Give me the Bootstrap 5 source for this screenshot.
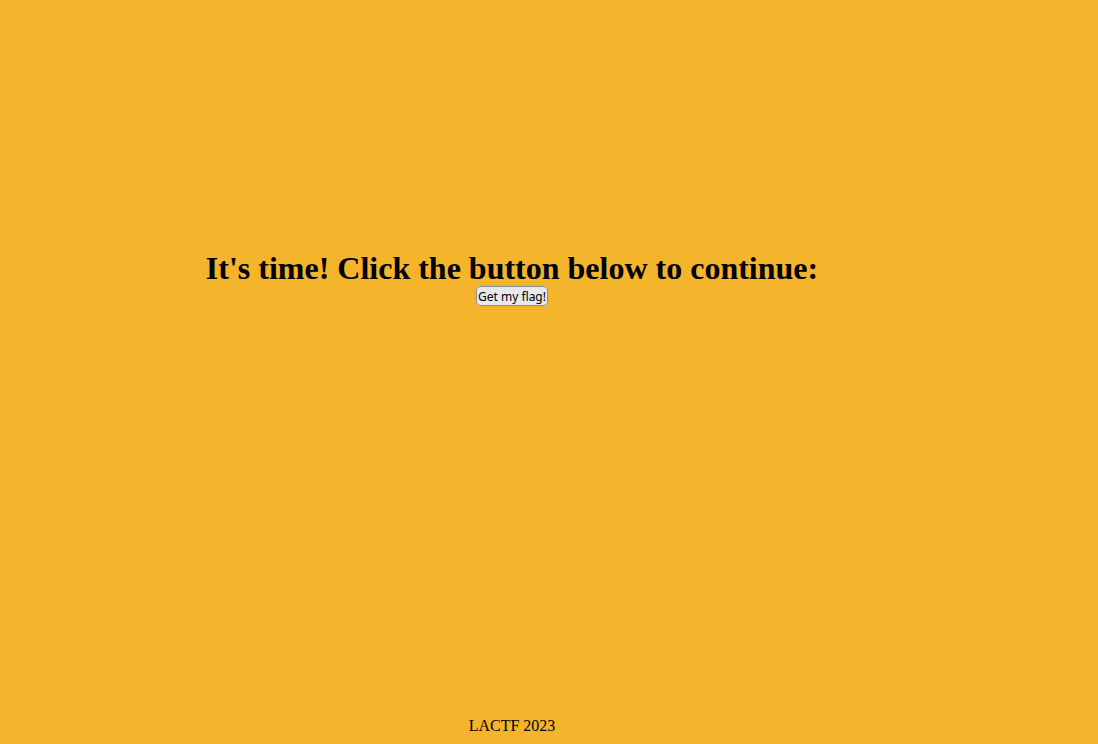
<!DOCTYPE html>
<html lang="en">
<head>
<meta charset="utf-8">
<meta name="viewport" content="width=device-width, initial-scale=1">
<title>LACTF 2023</title>
<link href="https://cdn.jsdelivr.net/npm/bootstrap@5.3.0/dist/css/bootstrap.min.css" rel="stylesheet">
<style>
body { background: #f4b42c; color: #000; font-family: "Liberation Serif", "Times New Roman", serif; padding-right: 74px; }
h1 { font-size: 32px; font-weight: 700; line-height: 36px; }
.flag-btn { background: #e9e9ed; color: #000; border: 1px solid #8f8f9d; border-radius: 4px; padding: 2px 1px 0; font-family: "Noto Sans", sans-serif; font-size: 12px; line-height: 16px; }
.flag-btn:hover { background: #d0d0d7; color: #000; }
footer { font-size: 16px; line-height: 18px; padding-bottom: 9px; }
main { padding-top: 26px; padding-bottom: 188px; }
</style>
</head>
<body class="d-flex flex-column min-vh-100 text-center">
<main class="flex-grow-1 d-flex flex-column align-items-center justify-content-center">
<h1 class="m-0">It's time! Click the button below to continue:</h1>
<button type="button" class="btn flag-btn">Get my flag!</button>
</main>
<footer>LACTF 2023</footer>
<script src="https://cdn.jsdelivr.net/npm/bootstrap@5.3.0/dist/js/bootstrap.bundle.min.js"></script>
</body>
</html>
